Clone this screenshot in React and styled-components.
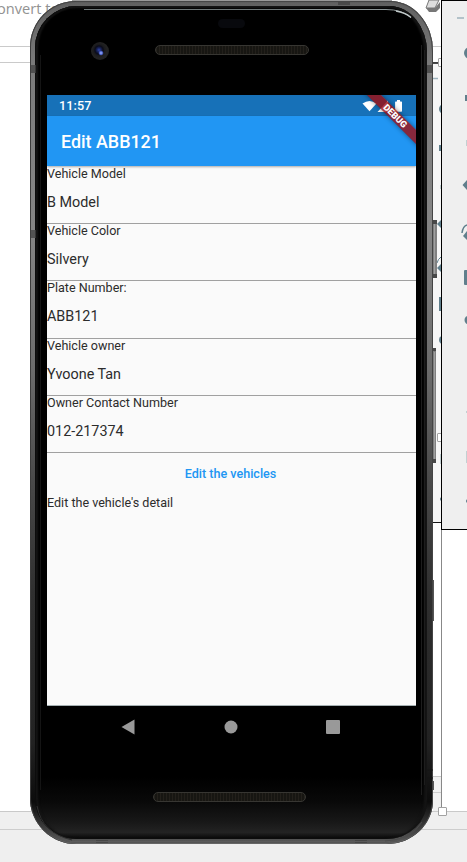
import React from "react";
import styled, { createGlobalStyle } from "styled-components";

const GlobalStyle = createGlobalStyle`
  * { box-sizing: border-box; }
  html, body { margin: 0; padding: 0; background: #fff; overflow: hidden; }
  body { font-family: Roboto, "Liberation Sans", sans-serif; }
`;

const Desktop = styled.main`
  position: relative;
  display: flex;
  flex-direction: column;
  width: 467px;
  height: 862px;
  overflow: hidden;
  background: #fff;
`;

const DocumentTop = styled.div`
  height: 46px;
  flex: none;
  overflow: hidden;
`;

const Heading = styled.span`
  display: block;
  margin: -3px 0 0 -3px;
  font: 14.6px/22px "Open Sans", sans-serif;
  color: #929292;
  white-space: nowrap;
`;

const Ruler = styled.div`
  width: 441px;
  height: 17px;
  flex: none;
  border: solid #cacaca;
  border-width: 1px 0;
`;

const Canvas = styled.div`
  flex: 1;
`;

const Taskbar = styled.footer`
  height: 51px;
  flex: none;
  padding-top: 17px;
  background: #efefef;
  border-top: 1px solid #c9c9c9;
`;

const TaskbarRule = styled.div`
  height: 1px;
  background: #cdcdcd;
`;

/* A piece of a desktop window showing behind the emulator */
const Pane = styled.div`
  position: absolute;
  left: ${(p) => p.$x}px;
  top: ${(p) => p.$y}px;
  width: ${(p) => p.$w}px;
  height: ${(p) => p.$h}px;
  background: ${(p) => p.$bg || "transparent"};
  border-style: solid;
  border-width: ${(p) => p.$bw || "0"};
  border-color: ${(p) => p.$line || "#cbcbcb"};
`;

const PaneRule = styled.div`
  height: 1px;
  margin-top: 15px;
  background: #ccc;
`;

const Handle = styled.i`
  position: absolute;
  left: ${(p) => p.$x}px;
  top: ${(p) => p.$y}px;
  width: 9px;
  height: 9px;
  border: 1px solid #a2a2a2;
  border-radius: 1px;
  background: #fff;
`;

const Drawing = styled.svg`
  position: absolute;
  left: ${(p) => p.$x || 0}px;
  top: 0;
  display: block;
`;

const Phone = styled.section`
  position: absolute;
  left: 30px;
  top: 1px;
  width: 403px;
  height: 843px;
  padding: 5px 6px 5px 5px;
  border-radius: 46px 43px 46px 46px / 46px 50px 44px 46px;
  background: linear-gradient(180deg, #606060 0, #7c7c7c 8%, #858585 27%, #6b6b6b 44%, #494949 57%, #303030 70%, #222 88%, #0c0c0c 95%, #555 99.6%);
  box-shadow: inset 1px 0 0 #3c3c3c, inset -1px 0 0 #444, inset 0 1px 1px #444, inset 0 -1px 0 #666;
`;

const Face = styled.div`
  display: flex;
  flex-direction: column;
  height: 100%;
  padding: 0 11px 0 12px;
  border-radius: 42px 38px 40px 41px / 42px 46px 39px 41px;
  background: linear-gradient(180deg, #000 0, #000 92.5%, #090909 95.5%, #181818 98%, #232323 99.2%, #050505 100%);
  box-shadow: inset 1px 0 0 #0c0c0c, inset 3px 0 2px #141414, inset -3px 0 2px #141414,
    inset 0 2px 2px #161616;
`;

const TopBezel = styled.div`
  display: flex;
  flex-direction: column;
  align-items: center;
  height: 89px;
  flex: none;
`;

const Sensor = styled.i`
  width: 27px;
  height: 9px;
  margin-top: 13px;
  border-radius: 5px;
  background: #08090d;
`;

const SpeakerRow = styled.div`
  display: flex;
  gap: 46px;
  align-self: stretch;
  align-items: center;
  height: 18px;
  margin-top: 14px;
  padding-left: 44px;
`;

const Camera = styled.i`
  width: 18px;
  height: 18px;
  border-radius: 50%;
  background:
    radial-gradient(circle at 10px 11px, #a7b9ff 0, #5269d2 1.5px, transparent 2.7px),
    radial-gradient(circle at 8px 8px, #3147ab 0, #18235d 2px, #0a0b19 4px, #1b1b1d 5.6px, #222 8px);
`;

const Speaker = styled.i`
  display: block;
  flex: none;
  width: ${(p) => p.$w}px;
  height: 10px;
  margin-top: ${(p) => p.$drop || 0}px;
  border: 1px solid #373632;
  border-radius: 5px;
  background: repeating-linear-gradient(90deg, #23201b 0 1px, #171612 1px 3px);
`;

const Screen = styled.div`
  position: relative;
  display: flex;
  flex-direction: column;
  flex: none;
  width: 369px;
  height: 611px;
  overflow: hidden;
  background: #fafafa;
  border-bottom: 1px solid #a5b0b2;
`;

const StatusBar = styled.div`
  display: flex;
  align-items: center;
  justify-content: space-between;
  height: 21px;
  flex: none;
  padding: 0 12px 0 12px;
  background: #1771b8;
  color: #fff;
  font-size: 12.6px;
  font-weight: 500;
  letter-spacing: 0.1px;
`;

const AppBar = styled.header`
  display: flex;
  align-items: center;
  height: 50px;
  flex: none;
  padding: 1px 14px 0;
  background: #2196f3;
  color: #fff;
  box-shadow: 0 1px 2px rgba(0, 0, 0, 0.32);
  font-size: 17.9px;
  font-weight: 500;
  z-index: 1;
`;

const Form = styled.div`
  display: flex;
  flex-direction: column;
`;

const Field = styled.label`
  display: flex;
  flex-direction: column;
  height: 57.2px;
  flex: none;
  box-shadow: 0 1px 0 #a0a0a0;
  color: #2c2c2c;
`;

const Caption = styled.span`
  font-size: 12.57px;
  line-height: 15px;
  color: #2c2c2c;
`;

const Value = styled.span`
  font-size: 14.37px;
  line-height: 43px;
`;

const TextButton = styled.button`
  align-self: center;
  height: 43px;
  padding: 0 2px 0 0;
  border: 0;
  background: none;
  color: #2196f3;
  font: 500 12.57px/43px Roboto, sans-serif;
`;

const DebugClip = styled.div`
  position: absolute;
  right: 0;
  top: 0;
  width: 60px;
  height: 60px;
  overflow: hidden;
  z-index: 2;
`;

const DebugBanner = styled.div`
  position: absolute;
  left: -11px;
  top: 15.5px;
  width: 100px;
  height: 10.4px;
  transform: rotate(45deg);
  background: rgba(160, 12, 14, 0.8);
  box-shadow: 0 0 5px rgba(0, 0, 0, 0.45);
  color: #fff;
  font-size: 9.1px;
  font-weight: 900;
  line-height: 11px;
  text-align: center;
`;

const NavBar = styled.nav`
  display: flex;
  justify-content: space-between;
  align-items: center;
  height: 42px;
  flex: none;
  padding: 0 76px 0 74px;
`;

const BottomBezel = styled.div`
  display: flex;
  justify-content: center;
  padding-top: 44px;
  margin-right: 4px;
`;

const FIELDS = [
  ["Vehicle Model", "B Model"],
  ["Vehicle Color", "Silvery"],
  ["Plate Number:", "ABB121"],
  ["Vehicle owner", "Yvoone Tan"],
  ["Owner Contact Number", "012-217374"],
];

function StatusIcons() {
  return (
    <svg width="44" height="14" viewBox="0 0 44 14" fill="#fff">
      <path d="M2.5 4.6Q9.5 -.6 16.5 4.6L9.5 12.2Z" />
      <path d="M28 1.5v11.5H17.5Z" />
      <path d="M35.8 2.4H37V1h3v1.4h1.3q.7 0 .7.7v9q0 .6-.7.6h-5.5q-.7 0-.7-.6v-9q0-.7.7-.7Z" />
    </svg>
  );
}

function BackTools() {
  return (
    <Drawing $x={433} width="8" height="522" viewBox="0 0 8 522" fill="#607f8c">
      <path d="M0 63h5" stroke="#111" strokeWidth="1.5" />
      <path d="M0 78.5h5" stroke="#9db3bd" strokeWidth="1.5" />
      <circle cx="11" cy="109" r="5" />
      <path d="M6 145h2v6H6ZM4 224l4-4v8ZM6 297h2v14H6Z" />
      <path d="M7 185h1v4H7ZM7 454h1v10H7Z" fill="#c3d0d2" />
      <path d="M4 263q1-4 4-6" fill="none" stroke="#607f8c" />
      <path d="M4 268l4-4v8Z" />
      <circle cx="10" cy="340" r="4" />
      <circle cx="9" cy="499" r="2" />
    </Drawing>
  );
}

function FrontTools() {
  return (
    <Drawing $x={441} width="26" height="529" viewBox="0 0 26 529" fill="#607f8c">
      <path d="M16 18h7" stroke="#9fb3bc" strokeWidth="1.5" />
      <circle cx="29" cy="53" r="6" />
      <path d="M24 95h2v6h-2ZM21.5 185l4.5-5v10ZM24 270h2v15h-2q-1 0-1-1v-13q0-1 1-1Z" />
      <path d="M21 233q1-7 5-8" fill="none" stroke="#607f8c" strokeWidth="1.5" />
      <path d="M22 236l4-5v9Z" />
      <circle cx="28" cy="320" r="4.5" />
      <path d="M25 140h1v6h-1ZM25 411h1v2h-1ZM25 451h1v12h-1Z" fill="#c3d0d2" />
      <circle cx="27" cy="501" r="2" />
    </Drawing>
  );
}

function PhoneDetails() {
  return (
    <Drawing width="467" height="862" viewBox="0 0 467 862" fill="none">
      <path d="M84 9.5H300" stroke="#6f7778" />
      <path d="M300 9.5H386Q402 9.5 411 17.5" stroke="#8d9697" />
      <path d="M396 11Q405 12.5 411 17.5" stroke="#c0c9c9" strokeWidth="1.4" />
      <path d="M31 65h5v8h-5ZM31 230h5v8h-5ZM427 65h6v8h-6ZM338 2h12v3h-12ZM96 840h12v3H96ZM355 840h12v3h-12Z" fill="#424242" opacity=".75" />
      <path d="M427 770h6M427 778h6" stroke="#151515" />
      <path d="M421.5 45V795M424.5 50V785" stroke="#1d1d1d" />
      <path d="M40.5 55V790" stroke="#141414" />
      <path d="M37 806Q42 833 72 840" stroke="#303030" />
      <path d="M70 841.5H390" stroke="#5b5b5b" />
      <path d="M385 841Q411 840 422 822" stroke="#4c4c4c" />
    </Drawing>
  );
}

function SideKeys() {
  return (
    <Drawing $x={432} width="6" height="862" viewBox="0 0 6 862">
      <path d="M0 220h5v58H0ZM0 348h4v115H0Z" fill="#808080" />
      <path d="M2.5 224v50M2.5 352v107" stroke="#a0a0a0" />
      <path d="M0 220h5v4H0ZM0 274h5v4H0ZM0 348h4v3H0ZM0 459h4v4H0Z" fill="#484848" />
      <path d="M0 580h2v41H0ZM0 781h2v9H0Z" fill="#555" />
    </Drawing>
  );
}

export default function App() {
  return (
    <>
      <GlobalStyle />
      <Desktop>
        <DocumentTop>
          <Heading>onvert to</Heading>
        </DocumentTop>
        <Ruler />
        <Canvas />
        <Taskbar>
          <TaskbarRule />
        </Taskbar>
        <Pane $x={72} $y={0} $w={320} $h={3} $bg="#989898" />
        <Pane $x={433} $y={63} $w={9} $h={460} $bg="#f6f6f6" $bw="0 0 1px" $line="#161616" />
        <Pane $x={433} $y={529} $w={9} $h={283} $bw="0 1px 0 0" $line="#888" />
        <Pane $x={433} $y={776} $w={8} $h={36} $bg="#f0f0f0" $bw="1px 0 1px">
          <PaneRule />
        </Pane>
        <BackTools />
        <Handle $x={438} $y={58} />
        <Handle $x={437} $y={433} />
        <Pane $x={441} $y={0} $w={28} $h={530} $bg="#efefef" $bw="1px 0 1px 1px" $line="#000" />
        <FrontTools />
        <Handle $x={438} $y={807} />
        <Drawing $x={425} width="16" height="13" viewBox="0 0 16 13">
          <path d="M4 0h10l-4 8H1Z" fill="#ddd" stroke="#777" />
          <path d="M1 8h9l5-6v6l-4 4H4Z" fill="#777" />
        </Drawing>
        <SideKeys />
        <Phone>
          <Face>
            <TopBezel>
              <Sensor />
              <SpeakerRow>
                <Camera />
                <Speaker $w={154} $drop={-2} />
              </SpeakerRow>
            </TopBezel>
            <Screen>
              <StatusBar>
                <span>11:57</span>
                <StatusIcons />
              </StatusBar>
              <AppBar>Edit ABB121</AppBar>
              <Form>
                {FIELDS.map(([caption, value]) => (
                  <Field key={caption}>
                    <Caption>{caption}</Caption>
                    <Value>{value}</Value>
                  </Field>
                ))}
                <TextButton>Edit the vehicles</TextButton>
                <Caption>Edit the vehicle's detail</Caption>
              </Form>
              <DebugClip>
                <DebugBanner>DEBUG</DebugBanner>
              </DebugClip>
            </Screen>
            <NavBar>
              <svg width="14" height="16" viewBox="0 0 14 16">
                <path d="M0.5 8 13.5 .5v15Z" fill="#999" />
              </svg>
              <svg width="14" height="14" viewBox="0 0 14 14">
                <circle cx="7" cy="7" r="6.5" fill="#999" />
              </svg>
              <svg width="14" height="14" viewBox="0 0 14 14">
                <rect width="14" height="14" rx="1" fill="#999" />
              </svg>
            </NavBar>
            <BottomBezel>
              <Speaker $w={153} />
            </BottomBezel>
          </Face>
        </Phone>
        <PhoneDetails />
      </Desktop>
    </>
  );
}
